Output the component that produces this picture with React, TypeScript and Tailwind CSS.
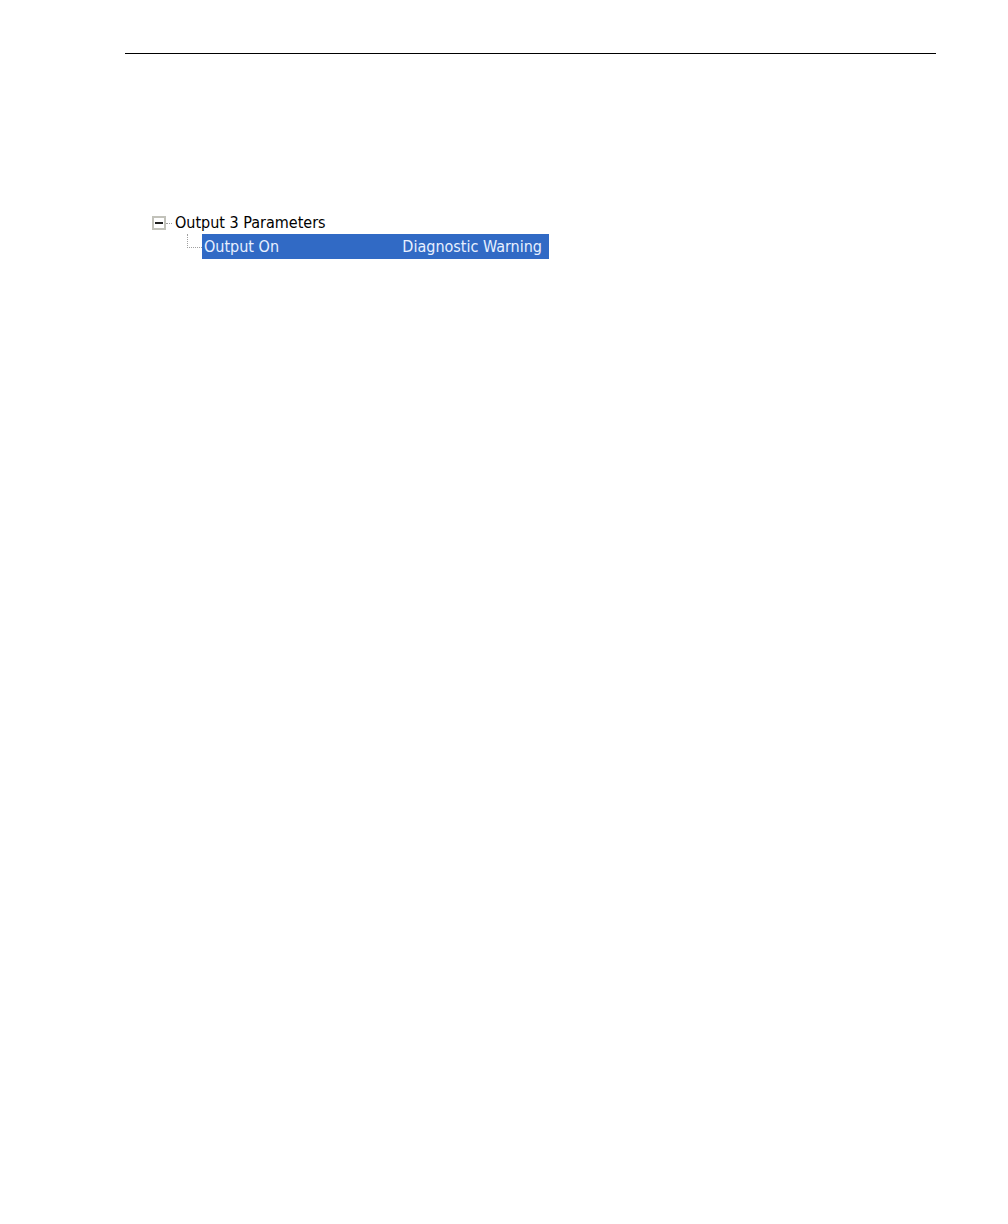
import { useState } from "react";

export default function App() {
  const [open, setOpen] = useState(true);

  return (
    <main className="min-h-screen bg-white pt-[53px] pr-[72px] pl-[125px] font-['DejaVu_Sans_Condensed','DejaVu_Sans',sans-serif] text-base text-black">
      <hr className="h-px border-0 bg-black" />
      <ul role="tree" aria-label="Parameters" className="mt-[158px] ml-[27px] max-w-[397px]">
        <li role="treeitem" aria-expanded={open}>
          <div className="flex h-[22px] items-center">
            <button
              type="button"
              aria-label="Toggle Output 3 Parameters"
              onClick={() => setOpen(!open)}
              className="flex size-[14px] shrink-0 items-center justify-center border-2 border-[#c2c2ba] bg-white"
            >
              <svg viewBox="0 0 8 8" className="size-2" aria-hidden="true">
                <path d="M0 3h8v2H0z" fill="#222" />
                {!open && <path d="M3 0h2v8H3z" fill="#222" />}
              </svg>
            </button>
            <span className="mr-[3px] w-[6px] border-t border-dotted border-[#a0a0a0]" />
            <span className="leading-6 whitespace-nowrap">Output 3 Parameters</span>
          </div>
          {open && (
            <ul role="group">
              <li role="treeitem" aria-selected="true" className="flex h-[25px]">
                <span className="ml-[35px] h-[14px] w-[15px] shrink-0 border-b border-l border-dotted border-[#a0a0a0]" />
                <div className="flex flex-1 items-center justify-between bg-[#316ac5] pr-[7px] pl-[2px] leading-6 whitespace-nowrap text-[#e8f0ff]">
                  <span>Output On</span>
                  <span>Diagnostic Warning</span>
                </div>
              </li>
            </ul>
          )}
        </li>
      </ul>
    </main>
  );
}
